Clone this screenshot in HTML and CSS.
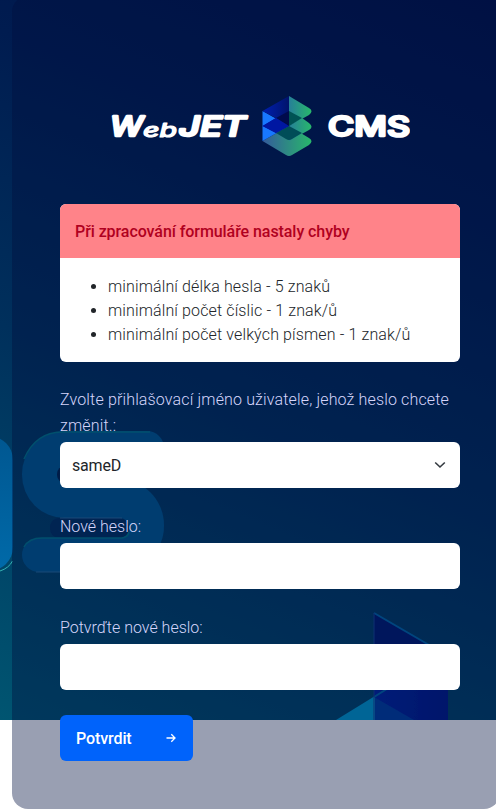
FILE: index.html
```html
<!DOCTYPE html>
<html lang="cs">
<head>
<meta charset="utf-8">
<title>WebJET CMS</title>
<link rel="stylesheet" href="styles.css">
</head>
<body>
<svg class="scene" viewBox="0 0 496 720" width="496" height="720" aria-hidden="true">
  <defs>
    <linearGradient id="leg" x1="0" y1="0" x2="0" y2="1"><stop offset="0" stop-color="#005791"/><stop offset="1" stop-color="#006aa9"/></linearGradient>
    <linearGradient id="cube"><stop offset="0" stop-color="#0027a0"/><stop offset="1" stop-color="#001a88"/></linearGradient>
    <filter id="soft"><feGaussianBlur stdDeviation=".7"/></filter>
  </defs>
  <rect x="-50" y="436" width="63" height="135" rx="24" fill="url(#leg)"/>
  <path d="M0 571Q9 568 12.500 561" fill="none" stroke="#35b5b5"/>
  <g filter="url(#soft)">
    <g fill="#005c91">
      <rect x="22" y="431" width="125" height="87" rx="43"/>
      <rect x="65" y="431" width="99" height="35" rx="17"/>
      <rect x="63" y="479" width="101" height="93" rx="46"/>
      <rect x="22" y="538" width="100" height="34" rx="17"/>
    </g>
    <rect x="50" y="518" width="79" height="20" rx="9" fill="#003160"/>
    <rect x="57" y="466" width="80" height="17" rx="8" fill="#002850"/>
    <path d="M24 459Q36 432 62 432H150M24 547Q29 538 42 538H122Q128 537 129 532" fill="none" stroke="#007b8d" stroke-width="1.5"/>
    <path d="M60 518H122M36 572H110" fill="none" stroke="#28709d"/>
    <path d="M374 613L448 656V720H374Z" fill="url(#cube)"/>
    <path d="M374 613L448 656V670H406L374 690Z" fill="#001c70"/>
    <path d="M374 697L414 720H374Z" fill="#0040a0"/>
    <path d="M336 720L375 696V720Z" fill="#009fd0"/>
    <path d="M374 613L448 656M374 697L406 677" fill="none" stroke="#006aa9" stroke-width="2"/>
    <path d="M374 613V720" stroke="#164494"/>
  </g>
</svg>
<main class="panel">
  <svg class="logo" viewBox="0 0 300 60" width="300" height="60" role="img" aria-label="WebJET CMS">
    <defs>
      <linearGradient id="green"><stop offset="0" stop-color="#267f98"/><stop offset="1" stop-color="#28b76b"/></linearGradient>
      <linearGradient id="base"><stop offset="0" stop-color="#345b9c"/><stop offset="1" stop-color="#28b76b"/></linearGradient>
      <linearGradient id="blue"><stop offset="0" stop-color="#001faf"/><stop offset="1" stop-color="#00136b"/></linearGradient>
    </defs>
    <g class="wordmark">
      <text class="slanted" x="0" y="40" textLength="33" lengthAdjust="spacingAndGlyphs">W</text>
      <text class="slanted small" x="33" y="40.500" textLength="34" lengthAdjust="spacingAndGlyphs">eb</text>
      <text class="slanted" x="69" y="40" textLength="67" lengthAdjust="spacingAndGlyphs">JET</text>
      <text x="218" y="40" textLength="82" lengthAdjust="spacingAndGlyphs">CMS</text>
    </g>
    <path d="M152.500 45L179 30L199 42Q204 45 199 49L182 59Q179 61 176 59Z" fill="url(#base)"/>
    <path d="M179 0L199 12Q204 15 199 19L179 30Z" fill="url(#green)"/>
    <path d="M179 30L192 22L199 27Q204 31 199 34L179 45Z" fill="url(#green)"/>
    <path d="M152.500 15V45L179 30Z" fill="#1878ff"/>
    <path d="M152.500 15L179 0V30L166 37L152.500 30L166 22Z" fill="url(#blue)"/>
    <path d="M166 22L179 15V30Z" fill="#000b4c"/>
    <path d="M179 15L192 22L179 30Z" fill="#005354"/>
    <path d="M166 37L179 30L192 37L182 43Q179 45 176 43Z" fill="#004d58"/>
    <path d="M152.500 30L166 22L179 30L166 37Z" fill="#0017a2"/>
  </svg>
  <section class="alert">
    <h1 class="alert-title">Při zpracování formuláře nastaly chyby</h1>
    <ul class="alert-list">
      <li>minimální délka hesla - 5 znaků</li>
      <li>minimální počet číslic - 1 znak/ů</li>
      <li>minimální počet velkých písmen - 1 znak/ů</li>
    </ul>
  </section>
  <form>
    <div class="field">
      <label class="wide" for="login">Zvolte přihlašovací jméno uživatele, jehož heslo chcete změnit.:</label>
      <div class="control select" id="login"><span>sameD</span>
        <svg width="12" height="12" viewBox="0 0 12 12"><path d="M1.200 3.500L6 8L10.800 3.500" fill="none" stroke="#343a40" stroke-width="1.600"/></svg>
      </div>
    </div>
    <div class="field">
      <label for="password">Nové heslo:</label>
      <input class="control" id="password" type="password">
    </div>
    <div class="field">
      <label for="repeat">Potvrďte nové heslo:</label>
      <input class="control" id="repeat" type="password">
    </div>
    <button class="submit" type="button"><span>Potvrdit</span>
      <svg width="10" height="10" viewBox="0 0 10 10"><path d="M.5 5H9M5.300 1.300L9 5L5.300 8.700" fill="none" stroke="#fff" stroke-width="1.300"/></svg>
    </button>
  </form>
</main>
</body>
</html>
```
FILE: styles.css
```css
* { box-sizing: border-box; }
html { background: #fff; overflow: hidden; }
body {
  position: relative;
  margin: 0;
  height: 809px;
  overflow: hidden;
  font: 300 16px/24px Roboto, "Open Sans", sans-serif;
  color: #212529;
  background: linear-gradient(202deg, #001248 0%, #001c50 25%, #00305c 57%, #005571 100%) 0 0 / 496px 720px no-repeat;
}
.scene { position: absolute; left: 0; top: 0; }
.panel {
  position: relative;
  width: 488px;
  height: 813px;
  margin: -4px 0 0 12px;
  padding: 100px 40px 48px 48px;
  border-radius: 16px;
  background: rgba(0, 15, 62, .4);
}
.logo { display: block; margin: 0 0 48px 50px; }
.wordmark {
  font: 500 27px/1 Inter, sans-serif;
  fill: #fff;
  stroke: #fff;
  stroke-width: 2.4px;
  stroke-linejoin: round;
}
.slanted { font-style: italic; }
.small { font-size: 19px; stroke-width: 1.1px; }
.alert { height: 158px; border-radius: 6px; overflow: hidden; background: #fff; }
.alert-title {
  margin: 0;
  padding: 16px 15px 14px;
  height: 54px;
  font-size: 16px;
  font-weight: 500;
  line-height: 24px;
  letter-spacing: -.07px;
  color: #b00020;
  background: #ff8389;
}
.alert-list { margin: 0; padding: 17px 0 15px 48px; letter-spacing: .13px; }
form { margin-top: 24px; }
.field { margin-bottom: 25px; }
label { display: block; line-height: 26px; padding-top: 1px; margin-bottom: 3px; color: #d5d5fb; }
.wide { letter-spacing: .15px; }
.control {
  display: block;
  width: 400px;
  height: 46px;
  border: 0;
  border-radius: 6px;
  background: #fff;
}
.select {
  display: flex;
  align-items: center;
  justify-content: space-between;
  padding: 0 14px 0 12px;
  font-weight: 400;
  letter-spacing: -.2px;
}
.select span { padding-top: 2px; }
.submit {
  display: flex;
  align-items: center;
  justify-content: space-between;
  width: 133px;
  height: 46px;
  padding: 0 17px 0 16px;
  border: 0;
  border-radius: 6px;
  background: #0063fb;
  color: #fff;
  font: 500 16px/24px Roboto, sans-serif;
  letter-spacing: -.1px;
}
.submit span { padding-top: 2px; }
```
